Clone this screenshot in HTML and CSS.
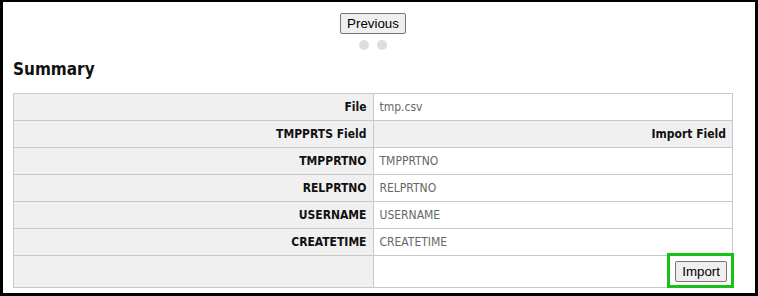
FILE: index.html
```html
<!DOCTYPE html>
<html>
  <head>
    <title>Import Summary</title>
    <link rel="stylesheet" href="styles.css">
  </head>
  <body>
    <div class="frame">
      <div class="wizardNav">
        <button class="btn">Previous</button>
        <div class="steps">
          <span class="dot"></span>
          <span class="dot"></span>
        </div>
      </div>
      <h2 class="title">Summary</h2>
      <table class="summary">
        <tr>
          <th>File</th>
          <td>tmp.csv</td>
        </tr>
        <tr>
          <th>TMPPRTS Field</th>
          <th>Import Field</th>
        </tr>
        <tr>
          <th>TMPPRTNO</th>
          <td>TMPPRTNO</td>
        </tr>
        <tr>
          <th>RELPRTNO</th>
          <td>RELPRTNO</td>
        </tr>
        <tr>
          <th>USERNAME</th>
          <td>USERNAME</td>
        </tr>
        <tr>
          <th>CREATETIME</th>
          <td>CREATETIME</td>
        </tr>
        <tr>
          <th></th>
          <td class="actions"><button class="btn highlight">Import</button></td>
        </tr>
      </table>
    </div>
  </body>
</html>
```

FILE: styles.css
```css
html, body {
  margin: 0;
  background: #fff;
}
body {
  font-family: 'DejaVu Sans Condensed', 'DejaVu Sans', sans-serif;
}
.frame {
  box-sizing: border-box;
  height: 296px;
  border: solid #000;
  border-width: 2px 3px 3px 3px;
  padding: 11px 22px 0 10px;
}
.wizardNav {
  text-align: center;
}
.btn {
  font: 13.33px 'Liberation Sans', Arial, sans-serif;
  color: #000;
  background: #efefef;
  border: 1px solid #767676;
  border-radius: 2px;
  padding: 2px 6px;
  line-height: 15px;
}
.steps {
  display: flex;
  justify-content: center;
  gap: 8px;
  margin-top: 6px;
}
.dot {
  width: 10px;
  height: 10px;
  border-radius: 50%;
  background: #ddd;
}
.title {
  font-size: 17px;
  line-height: 20px;
  font-weight: bold;
  color: #111;
  margin: 9px 0 14px 0;
}
.summary {
  width: 720px;
  border-collapse: collapse;
  table-layout: fixed;
  font-size: 12px;
  line-height: 14px;
}
.summary th, .summary td {
  border: 1px solid #c8c8c8;
  padding: 6px 6px;
  text-align: left;
}
.summary th {
  background: #f0f0f0;
  color: #111;
  text-align: right;
  font-weight: bold;
}
.summary td {
  color: #666;
}
.summary td.actions {
  text-align: right;
  padding: 5px 5px;
}
/* green marker box drawn over the import button */
.highlight {
  position: relative;
}
.highlight::after {
  content: "";
  position: absolute;
  left: -9px;
  right: -8px;
  top: -9px;
  bottom: -7px;
  border: 3px solid #17c217;
}
```
